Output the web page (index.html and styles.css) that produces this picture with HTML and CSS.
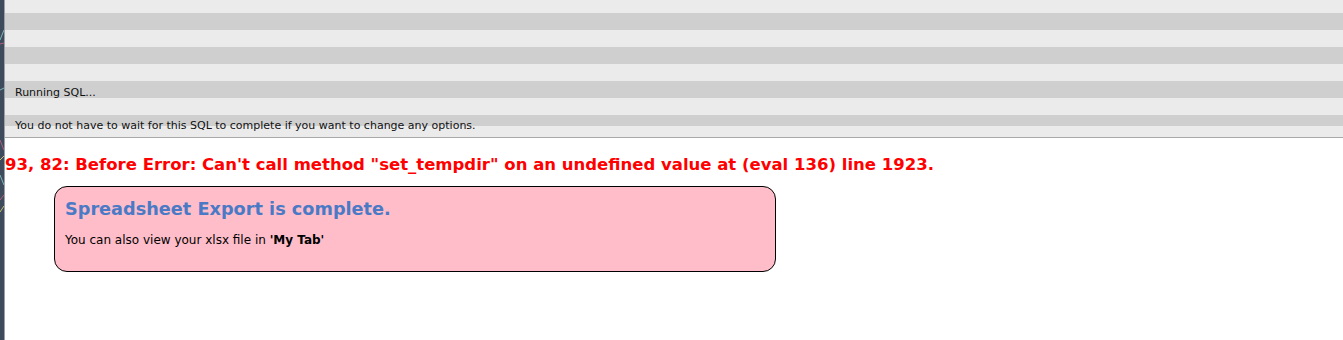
FILE: index.html
```html
<!DOCTYPE html>
<html>
<head>
<meta charset="utf-8">
<link rel="stylesheet" href="styles.css">
</head>
<body>
<div class="page">
  <div class="edge">
    <svg class="edge-art" width="4" height="340" viewBox="0 0 4 340">
      <path d="M0 40 L4 30" stroke="#7fb6b8" stroke-width="1" fill="none"/>
      <path d="M0 44 L4 43" stroke="#b0607a" stroke-width="1" fill="none"/>
      <path d="M0 90 L4 88" stroke="#7fb6b8" stroke-width="1" fill="none"/>
      <path d="M0 140 L4 150" stroke="#b0607a" stroke-width="1" fill="none"/>
      <path d="M0 160 L4 156" stroke="#c8c070" stroke-width="1" fill="none"/>
      <path d="M0 175 L4 185" stroke="#7fb6b8" stroke-width="1" fill="none"/>
      <path d="M0 200 L4 195" stroke="#b0607a" stroke-width="1" fill="none"/>
      <path d="M0 212 L4 206" stroke="#c8c070" stroke-width="1" fill="none"/>
    </svg>
  </div>
  <div class="main">
    <div class="status">
      <div class="status-line running">Running SQL...</div>
      <div class="status-line note">You do not have to wait for this SQL to complete if you want to change any options.</div>
    </div>
    <div class="error">93, 82: Before Error: Can't call method "set_tempdir" on an undefined value at (eval 136) line 1923.</div>
    <div class="notice">
      <h2 class="notice-title">Spreadsheet Export is complete.</h2>
      <p class="notice-text">You can also view your xlsx file in <b>'My Tab'</b></p>
    </div>
  </div>
</div>
</body>
</html>
```
FILE: styles.css
```css
html, body {
  margin: 0;
  padding: 0;
  background: #ffffff;
}
body {
  font-family: "DejaVu Sans", Verdana, sans-serif;
  color: #000;
  overflow: hidden;
}
.page {
  display: flex;
  height: 340px;
}
.edge {
  width: 4px;
  flex: 0 0 4px;
  background: #3d4b5d;
  border-right: 1px solid #9aa0a6;
}
.edge-art {
  display: block;
}
.main {
  flex: 1;
  min-width: 0;
}
.status {
  box-sizing: border-box;
  height: 138px;
  border-bottom: 1px solid #a9a9a9;
  background:
    linear-gradient(to bottom, transparent 0 126px, #ebebeb 126px 137px),
    repeating-linear-gradient(to bottom, #ebebeb 0 17px, #cfcfcf 17px 34px);
  background-position: 0 0, 0 -4px;
  background-repeat: no-repeat, repeat;
  display: flex;
  flex-direction: column;
  padding-top: 86px;
}
.status-line {
  font-size: 11px;
  line-height: 13px;
  padding-left: 10px;
  color: #111;
}
.note {
  margin-top: 20px;
}
.error {
  color: #ff0000;
  font-weight: bold;
  font-size: 16.5px;
  line-height: 20px;
  margin-top: 17px;
  white-space: nowrap;
}
.notice {
  margin: 11px 0 0 49px;
  height: 84px;
  width: 710px;
  background: #ffbdc9;
  border: 1px solid #000;
  border-radius: 13px;
  padding: 0 0 0 10px;
}
.notice-title {
  margin: 11px 0 0 0;
  color: #4a7ac6;
  font-size: 17.7px;
  line-height: 22px;
  font-weight: bold;
}
.notice-text {
  margin: 13px 0 0 0;
  font-size: 12px;
  line-height: 14px;
}
```
